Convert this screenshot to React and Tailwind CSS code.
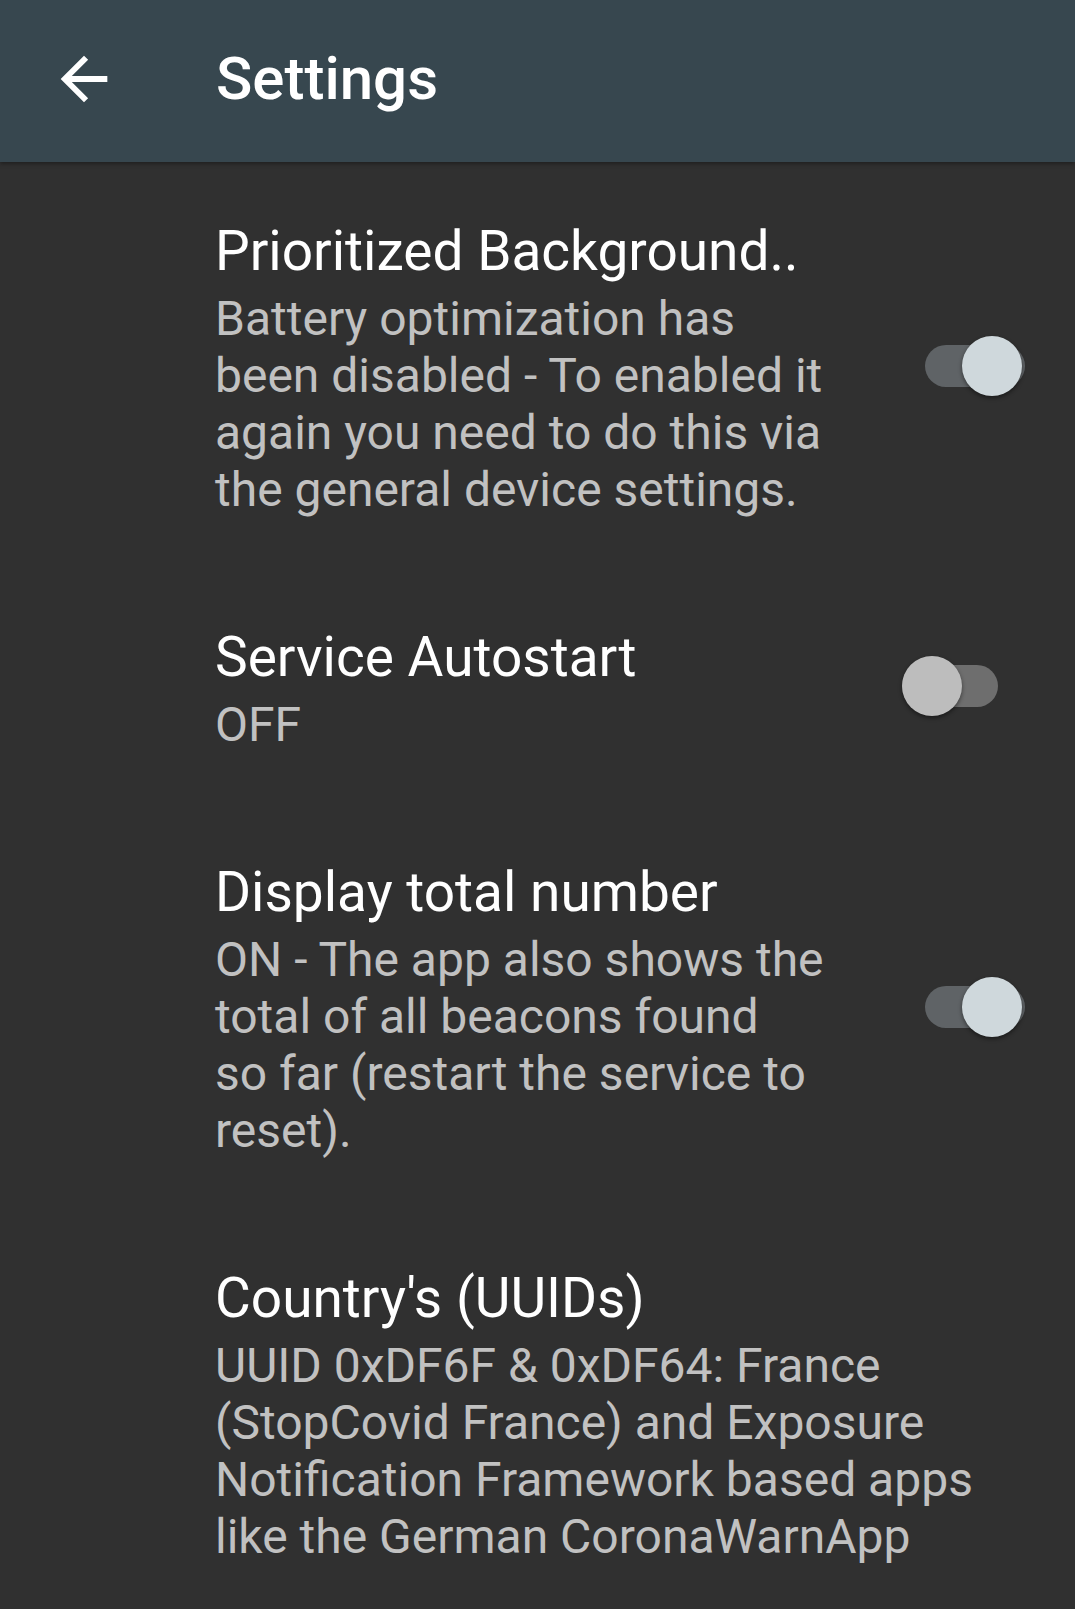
import React from "react";

function Switch({ on }) {
  return (
    <div className={on ? "flex w-[123px] justify-end" : "flex w-[123px] justify-start"}>
      <div
        className={
          on
            ? "flex h-[42px] w-[100px] items-center justify-end rounded-full bg-[#5f6366]"
            : "flex h-[42px] w-[96px] items-center justify-start rounded-full bg-[#6e6e6e]"
        }
      >
        <div
          className={
            on
              ? "mr-[3px] h-[60px] w-[60px] shrink-0 rounded-full bg-[#cfd8dc] shadow-[0_2px_4px_rgba(0,0,0,0.45)]"
              : "h-[60px] w-[60px] shrink-0 rounded-full bg-[#bdbdbd] shadow-[0_2px_4px_rgba(0,0,0,0.45)]"
          }
        />
      </div>
    </div>
  );
}

function Item({ title, lines, toggle }) {
  return (
    <div className="flex items-center pt-[57px] pb-[50px] pl-[215px]">
      <div className="flex-1">
        <div className="text-[55px] leading-[64px] text-white whitespace-nowrap">{title}</div>
        <div className="mt-[7px] text-[48px] leading-[57px] text-[#c1c1c1] whitespace-nowrap">
          {lines.map((l, i) => (
            <div key={i}>{l}</div>
          ))}
        </div>
      </div>
      {toggle !== undefined && (
        <div className="mr-[50px] mb-[6px]">
          <Switch on={toggle} />
        </div>
      )}
    </div>
  );
}

export default function App() {
  return (
    <div className="min-h-[1609px] w-[1075px] overflow-hidden bg-[#303030] font-['Roboto',sans-serif]">
      <div className="relative z-10 flex h-[162px] items-center bg-[#37474f] pb-[4px] shadow-[0_2px_4px_rgba(0,0,0,0.35)]">
        <svg className="ml-[49px]" width="70" height="70" viewBox="0 0 24 24" fill="#ffffff">
          <path d="M20 11H7.83l5.59-5.59L12 4l-8 8 8 8 1.41-1.41L7.83 13H20v-2z" />
        </svg>
        <div className="ml-[97px] text-[60px] font-medium leading-[70px] text-white">Settings</div>
      </div>
      <div>
        <Item
          title="Prioritized Background.."
          lines={[
            "Battery optimization has",
            "been disabled - To enabled it",
            "again you need to do this via",
            "the general device settings.",
          ]}
          toggle={true}
        />
        <Item title="Service Autostart" lines={["OFF"]} toggle={false} />
        <Item
          title="Display total number"
          lines={[
            "ON - The app also shows the",
            "total of all beacons found",
            "so far (restart the service to",
            "reset).",
          ]}
          toggle={true}
        />
        <Item
          title="Country's (UUIDs)"
          lines={[
            "UUID 0xDF6F & 0xDF64: France",
            "(StopCovid France) and Exposure",
            "Notification Framework based apps",
            "like the German CoronaWarnApp",
          ]}
        />
      </div>
    </div>
  );
}
